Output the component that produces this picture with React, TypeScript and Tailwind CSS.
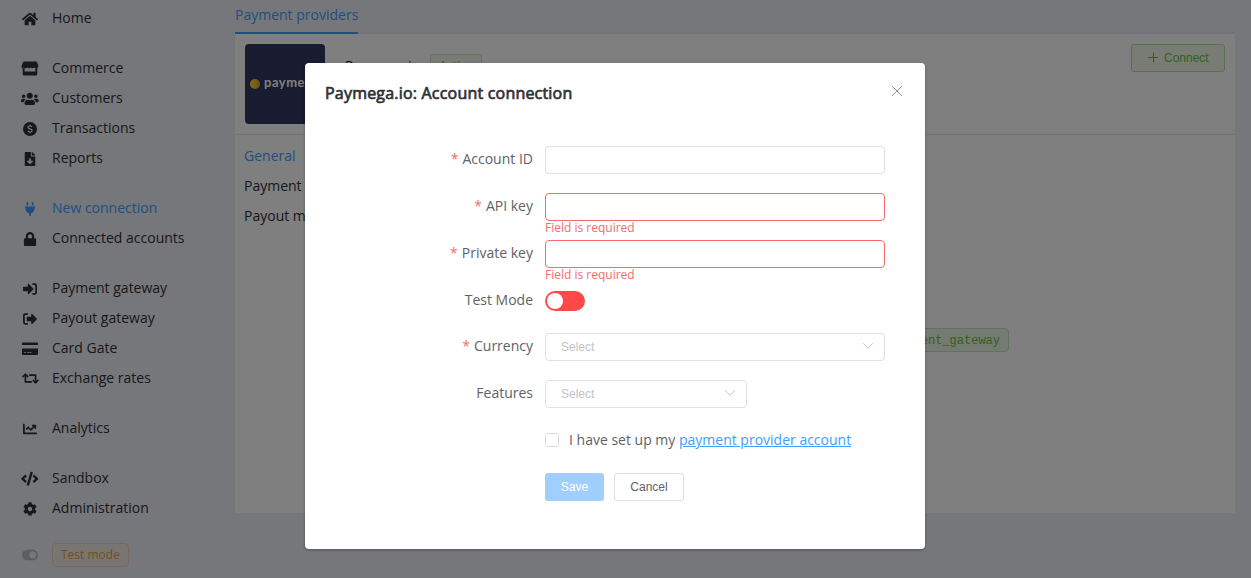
import React from 'react';
import {
  FaHome, FaUsers, FaFileDownload, FaPlug, FaLock, FaRetweet,
  FaChartLine, FaCode, FaCog, FaToggleOn,
} from 'react-icons/fa';

const StoreIcon = () => (
  <svg width="18" height="16" viewBox="0 0 18 16" fill="currentColor">
    <path d="M3.200 .5h11.600c.5 0 .9.200 1.100.6l1.300 3.200c.5 1.400-.3 2.900-1.700 2.900-.9 0-1.500-.3-1.900-.6-.4.400-1.200.6-2 .6s-1.500-.2-1.900-.6c-.4.400-1 .6-1.700.6s-1.400-.2-1.800-.6c-.4.400-1.100.6-1.900.6s-1.500-.2-1.900-.6c-.4.300-1 .6-1.900.6C.9 7.200.3 5.700.8 4.300l1.300-3.200c.2-.4.600-.6 1.100-.6z" />
    <path d="M1.700 7c.6.100 1.300 0 1.900-.2V10.500h10.800V6.800c.6.200 1.300.3 1.900.2v6c0 .9-.6 1.500-1.500 1.500H3.200c-.9 0-1.500-.6-1.500-1.500z" />
  </svg>
);

const DollarIcon = () => (
  <svg width="14" height="14" viewBox="0 0 14 14">
    <circle cx="7" cy="7" r="7" fill="currentColor" />
    <path d="M9 4.900c-.4-.6-1.100-.9-2-.9-1.200 0-2 .5-2 1.400 0 2.100 4.100.9 4.100 3.100 0 1-.9 1.500-2.100 1.500-1 0-1.800-.4-2.200-1M7 2.700V4M7 10v1.300" fill="none" stroke="#eceef6" strokeWidth="1.200" />
  </svg>
);

const SignInIcon = () => (
  <svg width="16" height="14" viewBox="0 0 16 14" fill="currentColor">
    <path d="M1.700 4.700h4.100V2.400c0-.6.700-.9 1.100-.5l4.400 4.500c.3.300.3.800 0 1.100L6.900 12c-.4.400-1.100.1-1.100-.5V9.300H1.700c-.4 0-.7-.3-.7-.7V5.400c0-.4.300-.7.700-.7z" />
    <path d="M10.400 2.200h2.500c.7 0 1.200.5 1.200 1.200v7.200c0 .7-.5 1.200-1.200 1.200h-2.500" fill="none" stroke="currentColor" strokeWidth="1.800" />
  </svg>
);

const SignOutIcon = () => (
  <svg width="16" height="14" viewBox="0 0 16 14" fill="currentColor">
    <path d="M5.400 4.700h3.800V2.400c0-.6.700-.9 1.100-.5l4.400 4.500c.3.300.3.800 0 1.100L10.300 12c-.4.400-1.100.1-1.100-.5V9.300H5.400c-.4 0-.7-.3-.7-.7V5.400c0-.4.300-.7.700-.7z" />
    <path d="M5.900 2.200H3.200c-.8 0-1.300.5-1.300 1.200v7.200c0 .7.500 1.200 1.300 1.200h2.700" fill="none" stroke="currentColor" strokeWidth="1.800" />
  </svg>
);

const CardIcon = () => (
  <svg width="16" height="14" viewBox="0 0 16 14">
    <path d="M1.200 .5h13.600c.7 0 1.200.5 1.200 1.100V3H0V1.600C0 1 .5.500 1.200.5zM0 6.500h16V12c0 .6-.5 1-1.200 1H1.200C.5 13 0 12.600 0 12z" fill="currentColor" />
    <path d="M2 10.500h2M5 10.500h4.500" stroke="#eceef6" strokeOpacity=".7" />
  </svg>
);

type Item = { label: string; icon: React.ReactNode; active?: boolean };

const groups: Item[][] = [
  [{ label: 'Home', icon: <FaHome size={16} /> }],
  [
    { label: 'Commerce', icon: <StoreIcon /> },
    { label: 'Customers', icon: <FaUsers size={17.5} /> },
    { label: 'Transactions', icon: <DollarIcon /> },
    { label: 'Reports', icon: <FaFileDownload size={14} /> },
  ],
  [
    { label: 'New connection', icon: <FaPlug size={14} />, active: true },
    { label: 'Connected accounts', icon: <FaLock size={14} /> },
  ],
  [
    { label: 'Payment gateway', icon: <SignInIcon /> },
    { label: 'Payout gateway', icon: <SignOutIcon /> },
    { label: 'Card Gate', icon: <CardIcon /> },
    { label: 'Exchange rates', icon: <FaRetweet size={17} /> },
  ],
  [{ label: 'Analytics', icon: <FaChartLine size={14} /> }],
  [
    { label: 'Sandbox', icon: <FaCode size={17.5} /> },
    { label: 'Administration', icon: <FaCog size={14} /> },
  ],
];

function Sidebar() {
  return (
    <aside className="flex w-[235px] shrink-0 flex-col gap-5 pt-[3px] pl-5">
      {groups.map((group, i) => (
        <nav key={i}>
          {group.map((item) => (
            <a
              key={item.label}
              className={`flex h-[30px] items-center gap-3 ${item.active ? 'text-[#409eff]' : 'text-[#303133]'}`}
            >
              <span className="flex w-5 justify-center pt-px">{item.icon}</span>
              <span>{item.label}</span>
            </a>
          ))}
        </nav>
      ))}
      <div className="flex items-center gap-3">
        <span className="flex w-5 justify-center text-[#bcbcbc]"><FaToggleOn size={16} /></span>
        <span className="flex h-6 items-center rounded border border-[#f0d3b8] bg-[#f3ebe6] px-2 text-xs text-[#e6a23c]">Test mode</span>
      </div>
    </aside>
  );
}

function Page() {
  return (
    <div className="flex h-full">
      <Sidebar />
      <main className="w-[1000px] text-[#303133]">
        <div className="flex h-[34px] border-b-2 border-[#e4e7ed]">
          <div className="h-[34px] border-b-2 border-[#409eff] pt-1 leading-[21px] text-[#409eff]">Payment providers</div>
        </div>
        <section className="h-[479px] bg-white">
          <header className="flex h-[101px] items-start border-b border-[#e4e7ed] p-2.5">
            <div className="flex size-20 shrink-0 items-center gap-1 overflow-hidden rounded bg-[#323660] pl-[5px]">
              <span className="size-2.5 shrink-0 rounded-full bg-linear-to-r from-[#f8e030] to-[#e4a020]" />
              <span className="pb-[3px] font-[Lato] text-[13px] font-bold tracking-[0.5px] text-white">paymega</span>
            </div>
            <div className="ml-5 flex h-6 w-[85px] translate-y-2.5 items-center">Paymega.io</div>
            <div className="mt-2.5 flex h-6 w-[52px] items-center justify-center rounded border border-[#c2e7b0] bg-[#f0f9eb] text-xs text-[#67c23a]">Active</div>
            <button className="ml-auto flex h-7 w-[94px] items-center gap-[5px] rounded-[3px] border border-[#b3e19d] bg-[#f0f9eb] pl-[15px] font-['Liberation_Sans'] text-xs text-[#67c23a]">
              <svg width="12" height="12" viewBox="0 0 12 12"><path d="M1 5.500h10M6.500 .5v10" stroke="currentColor" /></svg>
              Connect
            </button>
          </header>
          <div className="flex">
            <div className="w-[220px] pt-1.5 pl-[9px] leading-[30px]">
              <div className="text-[#409eff]">General</div>
              <div>Payment methods</div>
              <div>Payout methods</div>
            </div>
            <div className="flex w-[554px] justify-end pt-[193px]">
              <code className="flex h-6 items-center rounded border border-[#c6e5b8] bg-[#ebf6e7] px-2 pt-0.5 font-['Liberation_Mono'] text-xs text-[#67c23a]">payment_gateway</code>
            </div>
          </div>
        </section>
      </main>
    </div>
  );
}

function Row({ label, required, short, children }: { label?: string; required?: boolean; short?: boolean; children: React.ReactNode }) {
  return (
    <div className={`flex items-start ${short ? 'h-[46px]' : 'h-[47px]'}`}>
      <div className="w-[220px] shrink-0 pr-3 text-right leading-[26px] text-[#606266]">
        {required && <span className="mr-1 text-[#f56c6c]">*</span>}
        {label}
      </div>
      {children}
    </div>
  );
}

function Field({ error }: { error?: boolean }) {
  return (
    <div>
      <input className={`block h-7 w-[340px] rounded border bg-white ${error ? 'border-[#f56c6c]' : 'border-[#dcdfe6]'}`} />
      {error && <div className="pt-px text-xs leading-3 text-[#f56c6c]">Field is required</div>}
    </div>
  );
}

function Select({ width }: { width: string }) {
  return (
    <div className={`flex h-7 items-center justify-between rounded border border-[#dcdfe6] pr-2.5 pl-[15px] font-['Liberation_Sans'] text-xs text-[#c0c4cc] ${width}`}>
      Select
      <svg width="12" height="8" viewBox="0 0 12 8" className="-translate-y-px"><path d="M1 1.200l5 5 5-5" fill="none" stroke="currentColor" /></svg>
    </div>
  );
}

function Dialog() {
  return (
    <div className="h-[486px] w-[620px] rounded-sm bg-white shadow-[0_1px_3px_rgba(0,0,0,0.3)]">
      <div className="flex h-[42px] justify-between pt-5 pr-[22px] pl-5">
        <h1 className="text-base leading-[21px] font-normal tracking-[0.2px] text-[#303133] [-webkit-text-stroke:0.7px_#303133]">Paymega.io: Account connection</h1>
        <svg width="12" height="12" viewBox="0 0 12 12" className="mt-0.5 text-[#909399]"><path d="M1 1l10 10M11 1L1 11" stroke="currentColor" /></svg>
      </div>
      <form className="px-5 pt-[41px]">
        <Row label="Account ID" required><Field /></Row>
        <Row label="API key" required><Field error /></Row>
        <Row label="Private key" required><Field error /></Row>
        <Row label="Test Mode" short>
          <div className="mt-1 h-5 w-10 rounded-full bg-[#ff4949] p-0.5"><div className="size-4 rounded-full bg-white" /></div>
        </Row>
        <Row label="Currency" required><Select width="w-[340px]" /></Row>
        <Row label="Features" short><Select width="w-[202px]" /></Row>
        <Row>
          <div className="flex h-7 items-center text-[#606266]">
            <span className="mr-2.5 size-3.5 rounded-xs border border-[#dcdfe6]" />
            <span>I have set up my <a className="text-[#409eff] underline">payment provider account</a></span>
          </div>
        </Row>
        <Row>
          <div className="flex gap-2.5 font-['Liberation_Sans'] text-xs">
            <button type="button" className="h-7 w-[59px] rounded-[3px] bg-[#a0cfff] text-white">Save</button>
            <button type="button" className="h-7 w-[70px] rounded-[3px] border border-[#dcdfe6] text-[#606266]">Cancel</button>
          </div>
        </Row>
      </form>
    </div>
  );
}

export default function App() {
  return (
    <div className="relative h-[578px] w-[1251px] overflow-hidden bg-[#eceef6] font-['Open_Sans',sans-serif] text-sm">
      <Page />
      <div className="absolute inset-0 flex justify-center bg-black/50 pt-[63px] pr-[21px]">
        <Dialog />
      </div>
    </div>
  );
}
